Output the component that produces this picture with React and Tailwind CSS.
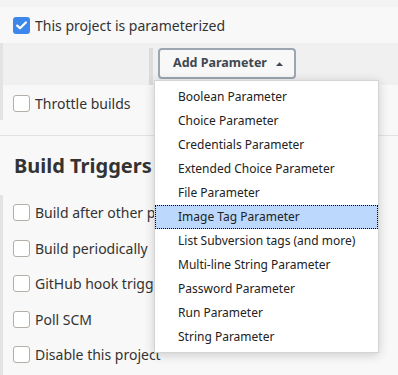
import React from "react";

function Box({ checked }) {
  if (checked) {
    return (
      <span className="flex h-[17px] w-[17px] shrink-0 items-center justify-center rounded-[3px] bg-[#3b87ec]">
        <svg width="11" height="9" viewBox="0 0 11 9" fill="none">
          <path d="M1.2 4.6 L4 7.3 L9.8 1.4" stroke="white" strokeWidth="2.2" strokeLinecap="round" strokeLinejoin="round" />
        </svg>
      </span>
    );
  }
  return <span className="block h-[17px] w-[17px] shrink-0 rounded-[3px] border border-[#b4aea8] bg-white" />;
}

function Row({ label, checked, h = "h-[35.5px]" }) {
  return (
    <div className={`flex ${h} items-center gap-[5px] pl-[13px]`}>
      <Box checked={checked} />
      <span className="text-[14px] whitespace-nowrap text-[#333]">{label}</span>
    </div>
  );
}

const items = [
  "Boolean Parameter",
  "Choice Parameter",
  "Credentials Parameter",
  "Extended Choice Parameter",
  "File Parameter",
  "Image Tag Parameter",
  "List Subversion tags (and more)",
  "Multi-line String Parameter",
  "Password Parameter",
  "Run Parameter",
  "String Parameter",
];

export default function App() {
  return (
    <div
      className="relative h-[375px] w-[398px] overflow-hidden bg-[#f8f8f8]"
      style={{ fontFamily: '"Noto Sans", "Open Sans", sans-serif' }}
    >
      <div className="h-[7px] bg-[#f3f3f3]" />
      <Row label="This project is parameterized" checked h="h-[36px]" />
      <div className="border-l-[3px] border-[#e3e3e3]">
        <div className="flex h-[42px] bg-[#f0f0f0] pt-[5px] pl-[146px]">
          <div className="w-[4px] bg-[#dcdcdc]" />
          <div className="ml-[5px] flex h-[31px] w-[138px] items-center justify-center gap-[9px] rounded-[4px] border-2 border-[#9ba6b1] bg-[#f8f8f8] pl-[2px] text-[12.5px] font-bold text-[#3f4750]">
            <span>Add Parameter</span>
            <svg width="7" height="4" viewBox="0 0 7 4">
              <path d="M0 4 L3.5 0.3 L7 4 Z" fill="#3f4750" />
            </svg>
          </div>
        </div>
        <div className="-ml-[3px] pt-[1px]">
          <Row label="Throttle builds" h="h-[34px]" />
        </div>
      </div>
      <div className="mt-[15px] h-px bg-[#e2e2e2]" />
      <div className="flex h-[59px] items-center pl-[14px] text-[20px] font-bold text-[#333]">
        Build Triggers
      </div>
      <div className="border-l-[3px] border-[#e3e3e3] pb-[20px]">
        <div className="-ml-[3px]">
          <Row label="Build after other projects are built" />
          <Row label="Build periodically" />
          <Row label="GitHub hook trigger for GITScm polling" />
          <Row label="Poll SCM" />
          <Row label="Disable this project" />
        </div>
      </div>

      <div className="absolute left-[154px] top-[80px] w-[225px] border border-[#d4d4d4] bg-white pt-[4px] pb-[3px] shadow-[0_2px_10px_rgba(0,0,0,0.18)]">
        {items.map((t) => (
          <div
            key={t}
            className={
              t === "Image Tag Parameter"
                ? "flex h-[24px] items-center border border-dotted border-black bg-[#bcd9fd] pl-[22px] text-[12px] text-[#222]"
                : "flex h-[24px] items-center border border-transparent pl-[22px] text-[12px] text-[#222]"
            }
          >
            {t}
          </div>
        ))}
      </div>
    </div>
  );
}
